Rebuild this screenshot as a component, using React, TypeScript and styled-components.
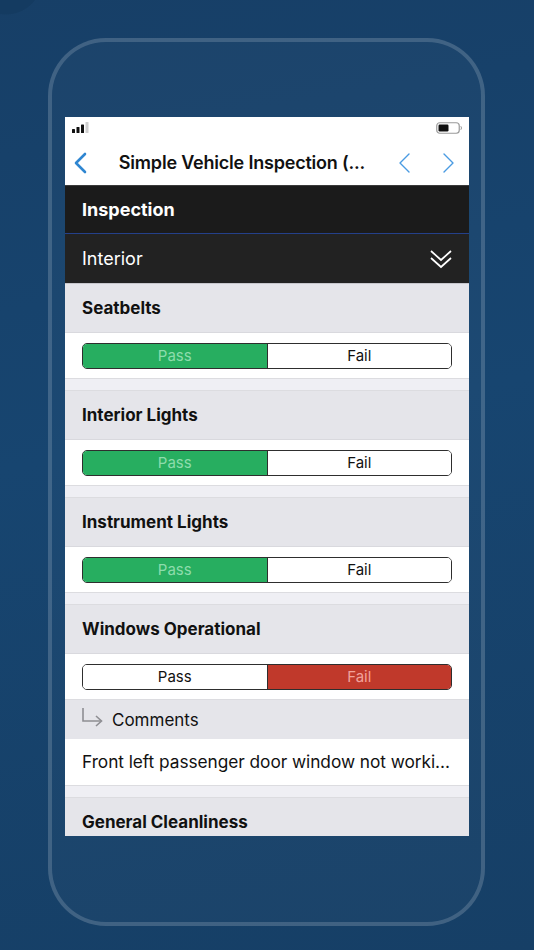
import * as React from 'react';
import styled, { createGlobalStyle } from 'styled-components';

type Result = 'pass' | 'fail';

type Item = {
  title: string;
  result?: Result;
  comment?: string;
};

// the last question is scrolled just under the bottom edge, only its header shows
const items: Item[] = [
  { title: 'Seatbelts', result: 'pass' },
  { title: 'Interior Lights', result: 'pass' },
  { title: 'Instrument Lights', result: 'pass' },
  {
    title: 'Windows Operational',
    result: 'fail',
    comment: 'Front left passenger door window not worki...',
  },
  { title: 'General Cleanliness' },
];

const GlobalStyle = createGlobalStyle`
  html, body {
    margin: 0;
    padding: 0;
  }

  body {
    background: #163f66;
    font-family: Inter, "Noto Sans", "Liberation Sans", sans-serif;
    -webkit-font-smoothing: antialiased;
  }
`;

const SignalIcon = () => (
  <svg width="18" height="12" viewBox="0 0 18 12">
    <rect x="0" y="7" width="3" height="4" rx="0.6" fill="#111" />
    <rect x="4.5" y="5" width="3" height="6" rx="0.6" fill="#111" />
    <rect x="9" y="2.5" width="3" height="8.5" rx="0.6" fill="#111" />
    <rect x="13.5" y="0" width="3" height="11" rx="0.6" fill="#cfcfcf" />
  </svg>
);

const BatteryIcon = () => (
  <svg width="27" height="12" viewBox="0 0 27 12">
    <rect x="0.75" y="0.75" width="22.5" height="10.5" rx="3" fill="none" stroke="#9a9a9a" strokeWidth="1.2" />
    <rect x="2.5" y="2.5" width="10" height="7" rx="1.2" fill="#111" />
    <path d="M24.8 4.2 Q26.3 6 24.8 7.8" fill="none" stroke="#9a9a9a" strokeWidth="1" />
  </svg>
);

const Chevron = ({ dir, weight }: { dir: 'left' | 'right'; weight: number }) => (
  <svg width="14" height="22" viewBox="0 0 14 22">
    <polyline
      points={dir === 'left' ? '11,2 2,11 11,20' : '3,2 12,11 3,20'}
      fill="none"
      stroke="currentColor"
      strokeWidth={weight}
      strokeLinecap="round"
      strokeLinejoin="round"
    />
  </svg>
);

const DoubleChevron = () => (
  <svg width="24" height="20" viewBox="0 0 24 20">
    <polyline points="2,2 12,11 22,2" fill="none" stroke="#fff" strokeWidth="1.7" />
    <polyline points="2,9 12,18 22,9" fill="none" stroke="#fff" strokeWidth="1.7" />
  </svg>
);

const ReplyArrow = () => (
  <svg width="24" height="20" viewBox="0 0 24 20">
    <polyline points="2,1 2,14 20,14" fill="none" stroke="#8e8e93" strokeWidth="1.6" />
    <polyline points="15,9 20.5,14 15,19" fill="none" stroke="#8e8e93" strokeWidth="1.6" />
  </svg>
);

const Segmented = ({ value }: { value?: Result }) => (
  <SegmentWrap>
    <Segment active={value === 'pass'} tone="#27ae60" activeText="#8ddcac">
      Pass
    </Segment>
    <Segment active={value === 'fail'} tone="#c0392b" activeText="#f1a29a">
      Fail
    </Segment>
  </SegmentWrap>
);

const InspectionItem = ({ item }: { item: Item }) => (
  <ItemBlock>
    <Question>{item.title}</Question>
    {item.result && (
      <AnswerRow>
        <Segmented value={item.result} />
      </AnswerRow>
    )}
    {item.comment && (
      <>
        <CommentLabel>
          <ReplyArrow />
          <span>Comments</span>
        </CommentLabel>
        <CommentText>{item.comment}</CommentText>
      </>
    )}
  </ItemBlock>
);

export default function App() {
  return (
    <>
      <GlobalStyle />
      <Page>
        <Phone>
          <Screen>
            <StatusBar>
              <SignalIcon />
              <BatteryIcon />
            </StatusBar>
            <NavBar>
              <NavButton>
                <Chevron dir="left" weight={2.6} />
              </NavButton>
              <NavTitle>Simple Vehicle Inspection (...</NavTitle>
              <NavArrows>
                <NavButton light>
                  <Chevron dir="left" weight={1.4} />
                </NavButton>
                <NavButton light>
                  <Chevron dir="right" weight={1.4} />
                </NavButton>
              </NavArrows>
            </NavBar>
            <SectionBar>Inspection</SectionBar>
            <GroupBar>
              <span>Interior</span>
              <DoubleChevron />
            </GroupBar>
            <List>
              {items.map((item) => (
                <InspectionItem key={item.title} item={item} />
              ))}
            </List>
          </Screen>
        </Phone>
      </Page>
    </>
  );
}

const Page = styled.div`
  min-height: 950px;
  box-sizing: border-box;
  padding: 38px 0 0 48px;
  display: flex;
  background:
    radial-gradient(circle at 6px -22px, #143b61 0 36px, transparent 37px),
    linear-gradient(170deg, #173f67 0%, #174570 45%, #163f66 100%);
  overflow: hidden;
`;

const Phone = styled.div`
  box-sizing: border-box;
  width: 437px;
  height: 888px;
  padding: 75px 12px 86px 13px;
  border: 4px solid rgba(255, 255, 255, 0.16);
  border-radius: 58px;
  background: rgba(255, 255, 255, 0.025);
`;

const Screen = styled.div`
  width: 404px;
  height: 719px;
  overflow: hidden;
  display: flex;
  flex-direction: column;
  background: #efeff4;
`;

const StatusBar = styled.div`
  height: 23px;
  flex-shrink: 0;
  padding: 5px 6px 0 7px;
  box-sizing: border-box;
  display: flex;
  justify-content: space-between;
  align-items: flex-start;
  background: #fff;
`;

const NavBar = styled.div`
  height: 46px;
  flex-shrink: 0;
  display: flex;
  align-items: center;
  padding: 0 14px 0 9px;
  box-sizing: border-box;
  background: #fff;
  border-bottom: 1px solid #3a3a3a;
`;

const NavButton = styled.div<{ light?: boolean }>`
  display: flex;
  align-items: center;
  color: ${({ light }) => (light ? '#4a9be2' : '#2f86d1')};
`;

const NavTitle = styled.div`
  flex: 1;
  text-align: center;
  font-size: 18px;
  font-weight: 600;
  color: #111;
  white-space: nowrap;
  overflow: hidden;
  padding-right: 2px;
  letter-spacing: -0.2px;
`;

const NavArrows = styled.div`
  display: flex;
  gap: 29px;
`;

const SectionBar = styled.div`
  height: 47px;
  flex-shrink: 0;
  display: flex;
  align-items: center;
  padding-left: 17px;
  background: #1b1b1b;
  border-bottom: 1px solid #24408a;
  color: #fff;
  font-size: 18px;
  font-weight: 700;
`;

const GroupBar = styled.div`
  height: 49px;
  flex-shrink: 0;
  display: flex;
  align-items: center;
  justify-content: space-between;
  padding: 0 16px 0 17px;
  background: #222222;
  border-bottom: 1px solid #c6c6cc;
  color: #fff;
  font-size: 18px;
  font-weight: 400;
`;

const List = styled.div`
  display: flex;
  flex-direction: column;
`;

const ItemBlock = styled.div`
  display: flex;
  flex-direction: column;
  margin-bottom: 11px;
  border-bottom: 1px solid #dcdce0;
  & + & {
    border-top: 1px solid #dcdce0;
  }
`;

const Question = styled.div`
  height: 48px;
  flex-shrink: 0;
  display: flex;
  align-items: center;
  padding-left: 17px;
  background: #e5e5ea;
  border-bottom: 1px solid #d9d9de;
  font-size: 17px;
  font-weight: 700;
  color: #111;
`;

const AnswerRow = styled.div`
  height: 45px;
  display: flex;
  align-items: center;
  padding: 0 17px;
  background: #fff;
`;

const SegmentWrap = styled.div`
  flex: 1;
  height: 26px;
  display: flex;
  box-sizing: border-box;
  border: 1.5px solid #2e2e2e;
  border-radius: 5px;
  overflow: hidden;
  & > * + * {
    border-left: 1px solid #2e2e2e;
  }
`;

const Segment = styled.div<{ active: boolean; tone: string; activeText: string }>`
  flex: 1;
  display: flex;
  align-items: center;
  justify-content: center;
  font-size: 15px;
  background: ${({ active, tone }) => (active ? tone : '#fff')};
  color: ${({ active, activeText }) => (active ? activeText : '#111')};
`;

const CommentLabel = styled.div`
  height: 39px;
  display: flex;
  align-items: center;
  gap: 7px;
  padding-left: 16px;
  background: #e5e5ea;
  border-top: 1px solid #dcdce0;
  font-size: 17px;
  color: #111;
  svg {
    margin-top: -6px;
  }
`;

const CommentText = styled.div`
  height: 46px;
  line-height: 46px;
  padding: 0 17px;
  background: #fff;
  font-size: 17.3px;
  letter-spacing: -0.05px;
  color: #111;
  white-space: nowrap;
`;
